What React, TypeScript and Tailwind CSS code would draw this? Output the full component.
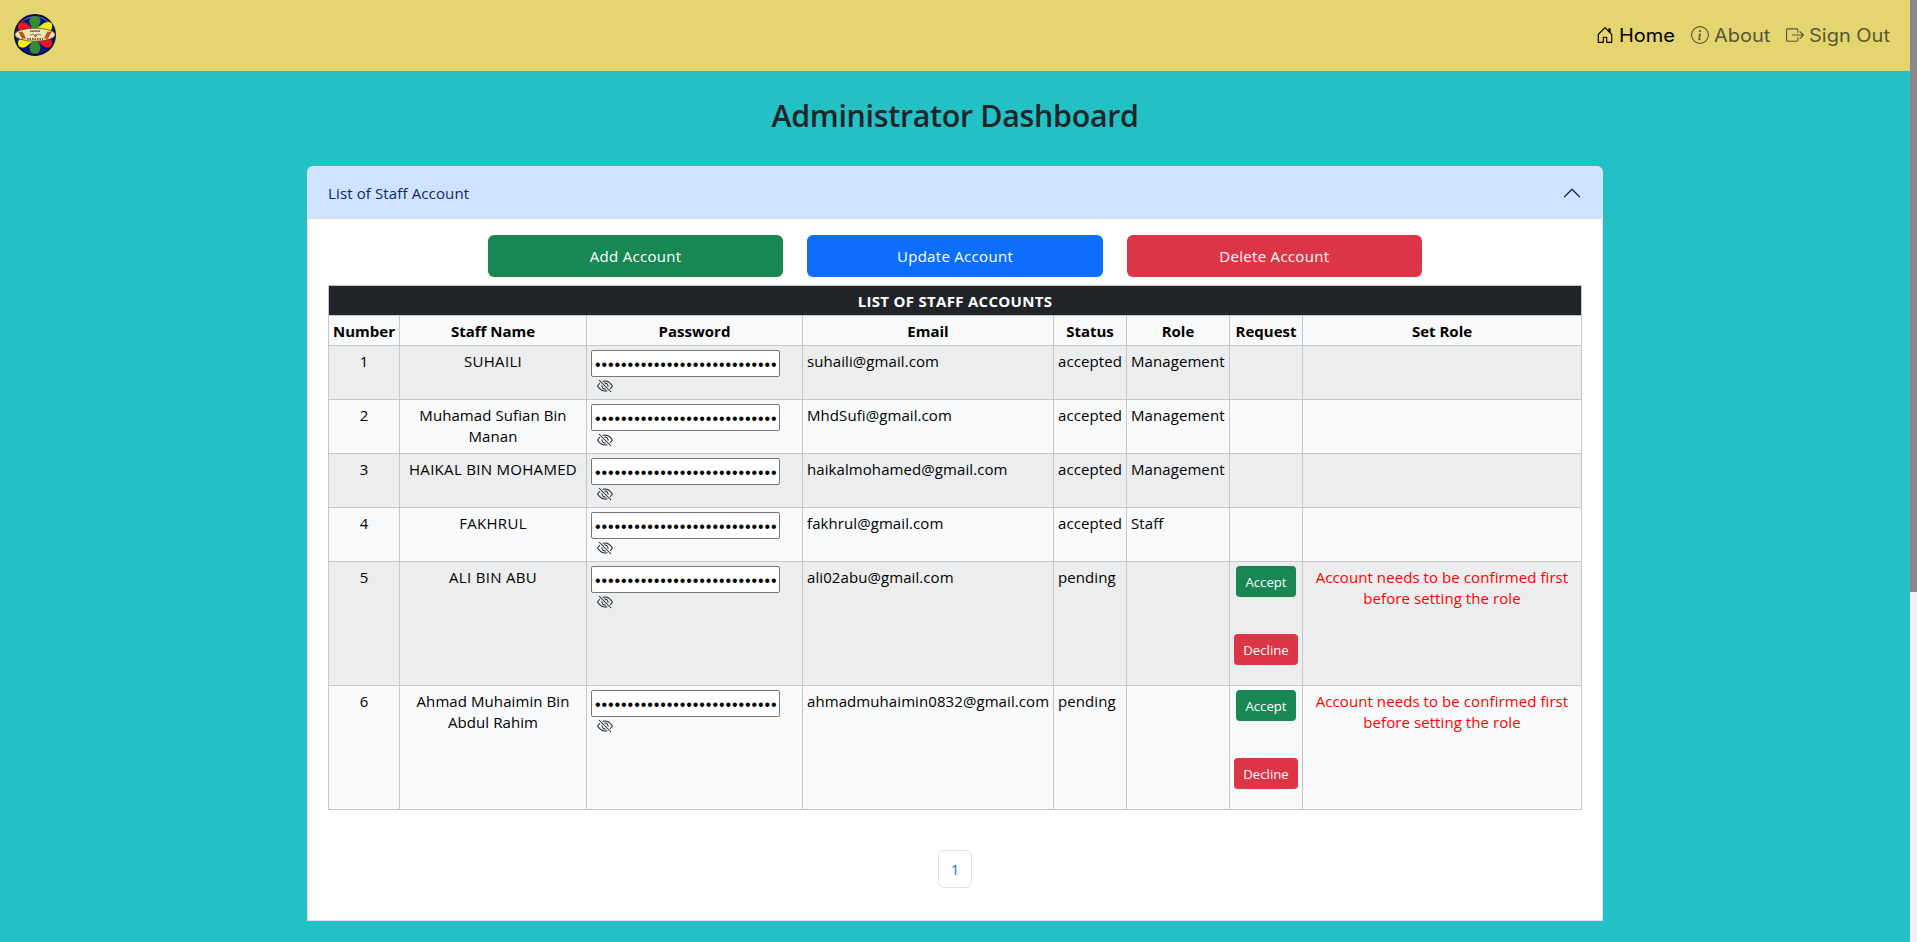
import type { ReactNode } from "react";
import { BsBoxArrowRight, BsEyeSlash, BsHouseDoor, BsInfoCircle } from "react-icons/bs";

type Account = {
  name: string;
  email: string;
  status: "accepted" | "pending";
  role: string;
};

const accounts: Account[] = [
  { name: "SUHAILI", email: "suhaili@gmail.com", status: "accepted", role: "Management" },
  { name: "Muhamad Sufian Bin Manan", email: "MhdSufi@gmail.com", status: "accepted", role: "Management" },
  { name: "HAIKAL BIN MOHAMED", email: "haikalmohamed@gmail.com", status: "accepted", role: "Management" },
  { name: "FAKHRUL", email: "fakhrul@gmail.com", status: "accepted", role: "Staff" },
  { name: "ALI BIN ABU", email: "ali02abu@gmail.com", status: "pending", role: "" },
  { name: "Ahmad Muhaimin Bin Abdul Rahim", email: "ahmadmuhaimin0832@gmail.com", status: "pending", role: "" },
];

const columns = ["Number", "Staff Name", "Password", "Email", "Status", "Role", "Request", "Set Role"];

function Logo() {
  return (
    <svg viewBox="0 0 42 42" className="size-[42px]">
      <circle cx="21" cy="21" r="20.3" fill="#0b1480" stroke="#0a0c26" strokeWidth="1.4" />
      <path d="M7 8 Q21 -3 35 8" fill="none" stroke="#8b93c8" strokeWidth="1" opacity="0.7" />
      <path d="M18.5 15 L15.3 8 Q15.5 4 18 2.4 H24 Q26.3 4 26.5 8 L23.5 15Z" fill="#2f8f2f" />
      <path d="M18.5 26 L15.3 33 Q15.5 37 18 39.4 H24 Q26.3 37 26.5 33 L23.5 26Z" fill="#2f8f2f" />
      <path d="M20 15 L5 16.5 Q2.8 12.5 5 9.6 Q8 7.2 12 9Z" fill="#f0141e" />
      <path d="M22 15 L30 9 Q34 7.2 37.5 9 Q39 12 37 16.5Z" fill="#f4ee10" />
      <path d="M20 26 L5 25.5 Q3 29.5 5 32.5 Q9 35 13 32Z" fill="#f4ee10" />
      <path d="M22 26 L29 32 Q33 35 37 32.5 Q39 29 37 25.5Z" fill="#f0141e" />
      <ellipse cx="21" cy="20.7" rx="20.2" ry="6.5" fill="#f3e3b4" stroke="#4b3a1c" strokeWidth="0.7" />
      <path d="M4.5 18 l4 -0.5 l3.5 7 l-4 0.3Z" fill="#b8561f" />
      <path d="M37.5 18 l-4 -0.5 l-3.5 7 l4 0.3Z" fill="#b8561f" />
      <path d="M16 17.2 H26.5" stroke="#3a3326" strokeWidth="1.2" strokeDasharray="1.6 0.5" />
      <path d="M13 25 H29" stroke="#3a3326" strokeWidth="1.3" strokeDasharray="1.5 1" />
      <path d="M16 21 l3 -1 l2 2 l3 -2 l3 1" fill="none" stroke="#777" strokeWidth="0.9" />
      <circle cx="21.5" cy="21.6" r="1.2" fill="#e0202a" />
    </svg>
  );
}

function ActionButton({ className, children }: { className: string; children: ReactNode }) {
  return (
    <button className={`h-[42px] flex-1 rounded-md text-center text-[15px] tracking-[0.3px] text-white ${className}`}>
      {children}
    </button>
  );
}

function PasswordCell() {
  return (
    <div className="flex flex-col items-start">
      <input
        type="password"
        readOnly
        value="passwordpasswordpasswordpass"
        className="h-[27px] w-[189px] rounded-[2px] border border-[#767676] bg-white pt-[3px] pr-0 pl-[3px] font-['Liberation_Sans'] text-[16px] tracking-[0.92px] text-black"
      />
      <BsEyeSlash className="mt-[1px] ml-[6px] size-4 text-[#212529]" />
    </div>
  );
}

const cell = "border-r border-b border-[#c6c7c8] px-1 pb-0 align-top";
const textCell = `${cell} pt-[5px]`;
const controlCell = `${cell} pt-1`;

function AccountRow({ account, index }: { account: Account; index: number }) {
  const pending = account.status === "pending";
  const upperCase = account.name === account.name.toUpperCase();
  return (
    <tr className={`${pending ? "h-[124px]" : "h-[54px]"} ${index % 2 === 0 ? "bg-[#ebedee]" : "bg-[#f8f9fa]"}`}>
      <td className={`${textCell} text-center`}>{index + 1}</td>
      <td className={`${textCell} text-center ${upperCase ? "tracking-[0.3px]" : ""}`}>{account.name}</td>
      <td className={controlCell}>
        <PasswordCell />
      </td>
      <td className={textCell}>{account.email}</td>
      <td className={textCell}>{account.status}</td>
      <td className={textCell}>{account.role}</td>
      <td className={controlCell}>
        {pending && (
          <div className="flex flex-col items-center gap-[37px] text-[13.2px] tracking-normal text-white">
            <button className="h-[31px] w-[60px] rounded bg-[#198754] pt-px">Accept</button>
            <button className="h-[31px] w-16 rounded bg-[#dc3545] pt-px">Decline</button>
          </div>
        )}
      </td>
      <td className={`${textCell} text-center text-[#ff0000]`}>
        {pending && (
          <>
            Account needs to be confirmed first
            <br />
            before setting the role
          </>
        )}
      </td>
    </tr>
  );
}

function NavItem({ icon, width, children }: { icon: ReactNode; width: string; children: ReactNode }) {
  return (
    <a className="flex items-center gap-[5px]">
      {icon}
      <span className={width}>
        <span className="inline-block origin-left scale-x-[1.11] whitespace-nowrap">{children}</span>
      </span>
    </a>
  );
}

export default function App() {
  return (
    <div className="flex h-[942px] w-full overflow-hidden bg-[#23c1c5] font-['Open_Sans','Noto_Sans',sans-serif] text-[15px] leading-[21px] font-normal tracking-[0.08px] text-black">
      <div className="flex min-w-0 flex-1 flex-col">
        <nav className="flex h-[71px] shrink-0 items-center justify-between bg-[#e4d571] pr-5 pb-px pl-[14px]">
          <Logo />
          <div className="flex items-center gap-4 font-['Inter',sans-serif] text-[18px] tracking-normal text-[#5b5531]">
            <div className="text-black">
              <NavItem width="w-[56px]" icon={<BsHouseDoor className="size-[18px]" />}>
                Home
              </NavItem>
            </div>
            <NavItem width="w-[56px]" icon={<BsInfoCircle className="size-[18px]" />}>
              About
            </NavItem>
            <NavItem width="w-[81px]" icon={<BsBoxArrowRight className="size-[18px]" />}>
              Sign Out
            </NavItem>
          </div>
        </nav>

        <h1 className="mt-[26px] text-center text-[30.4px] leading-[38px] font-semibold tracking-[-0.32px] text-[#212529]">
          Administrator Dashboard
        </h1>

        <section className="mx-auto mt-[31px] h-[755px] w-[1296px] shrink-0 rounded-t-md border border-[#dee2e6] bg-white">
          <header className="flex h-[52px] items-center justify-between rounded-t-[5px] border-b border-[#d9dfe8] bg-[#cfe2ff] px-5 text-[#052c65]">
            <span className="pt-[2px] tracking-[0.13px]">List of Staff Account</span>
            <svg viewBox="0 0 16 16" className="size-5" fill="#052c65">
              <path
                fillRule="evenodd"
                d="M14.354 11.354a.5.5 0 0 1-.708 0L8 5.707l-5.646 5.647a.5.5 0 0 1-.708-.708l6-6a.5.5 0 0 1 .708 0l6 6a.5.5 0 0 1 0 .708z"
              />
            </svg>
          </header>

          <div className="px-5 pt-4">
            <div className="mx-auto flex w-[934px] gap-6">
              <ActionButton className="bg-[#198754]">Add Account</ActionButton>
              <ActionButton className="bg-[#0d6efd]">Update Account</ActionButton>
              <ActionButton className="bg-[#dc3545]">Delete Account</ActionButton>
            </div>

            <table className="mt-2 w-[1254px] table-fixed border-separate border-spacing-0 border-t border-l border-[#c6c7c8]">
              <colgroup>
                <col className="w-[71px]" />
                <col className="w-[187px]" />
                <col className="w-[216px]" />
                <col className="w-[251px]" />
                <col className="w-[73px]" />
                <col className="w-[103px]" />
                <col className="w-[73px]" />
                <col className="w-[279px]" />
              </colgroup>
              <thead>
                <tr className="h-[30px] bg-[#212529] text-white">
                  <th colSpan={8} className={`${textCell} font-bold tracking-[0.3px]`}>
                    LIST OF STAFF ACCOUNTS
                  </th>
                </tr>
                <tr className="h-[30px] bg-[#f8f9fa]">
                  {columns.map((title) => (
                    <th key={title} className={`${textCell} font-bold tracking-normal`}>
                      {title}
                    </th>
                  ))}
                </tr>
              </thead>
              <tbody>
                {accounts.map((account, index) => (
                  <AccountRow key={account.email} account={account} index={index} />
                ))}
              </tbody>
            </table>

            <div className="mt-10 flex justify-center">
              <a className="flex h-[38px] w-[34px] items-center justify-center rounded-md border border-[#dee2e6] pt-px text-[#0d6efd]">
                1
              </a>
            </div>
          </div>
        </section>
      </div>

      <div className="w-[7px] shrink-0 bg-[#f1f1f1]">
        <div className="h-[592px] bg-[#888888]" />
      </div>
    </div>
  );
}
